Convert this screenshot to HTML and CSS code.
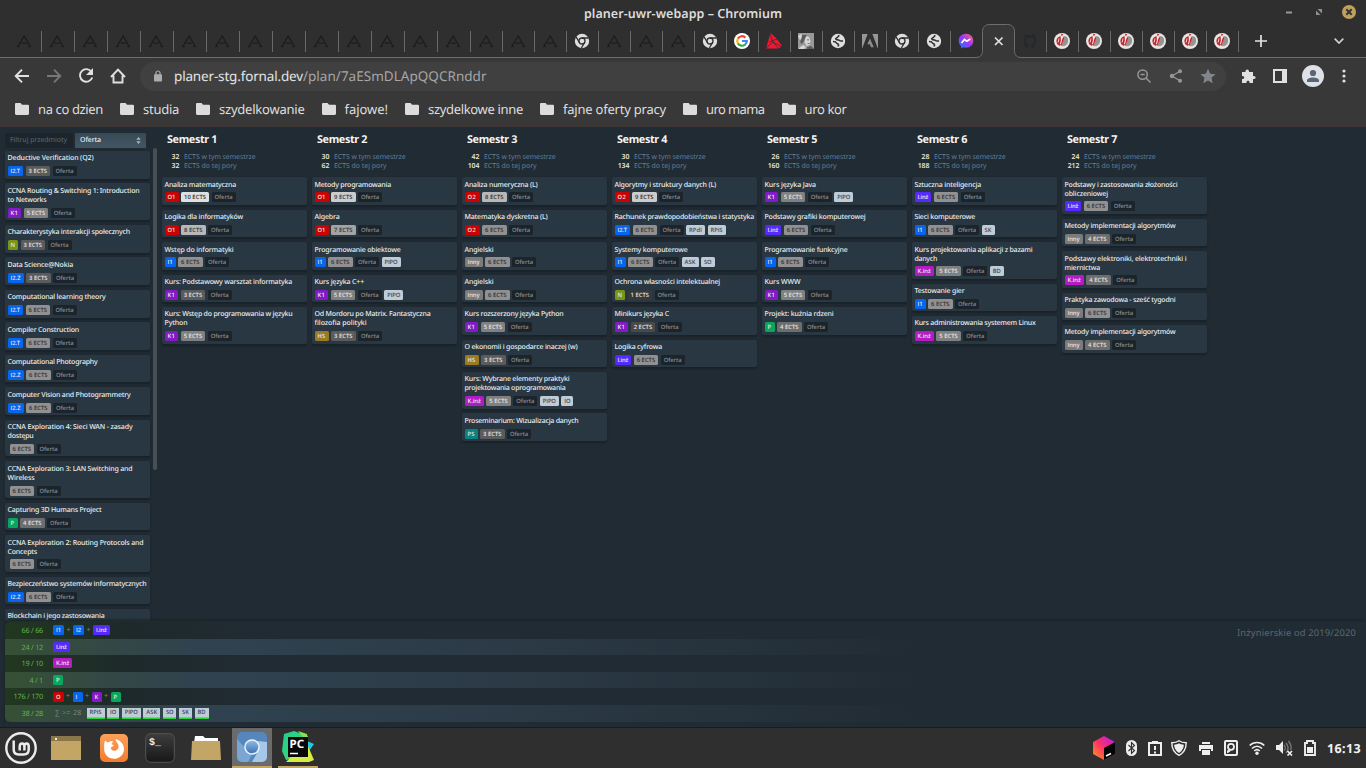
FILE: index.html
```html
<!DOCTYPE html>
<html lang="pl">
<head>
<meta charset="utf-8">
<title>planer-uwr-webapp</title>
<link rel="stylesheet" href="styles.css">
</head>
<body>
<svg class="defs" aria-hidden="true">
  <defs>
    <linearGradient id="gMsg" x1="0" y1="1" x2="1" y2="0"><stop offset="0" stop-color="#0a84ff"/><stop offset=".5" stop-color="#9a35ff"/><stop offset="1" stop-color="#ff6968"/></linearGradient>
    <linearGradient id="gFox" x1="0" y1="0" x2="0" y2="1"><stop offset="0" stop-color="#fba15a"/><stop offset="1" stop-color="#f47a2c"/></linearGradient>
    <linearGradient id="gTerm" x1="0" y1="0" x2="0" y2="1"><stop offset="0" stop-color="#3d3d3d"/><stop offset="1" stop-color="#181818"/></linearGradient>
    <linearGradient id="gBox" x1="0" y1="1" x2="1" y2="0"><stop offset="0" stop-color="#ff9a15"/><stop offset=".5" stop-color="#fc2f6b"/><stop offset="1" stop-color="#b01df2"/></linearGradient>
    <linearGradient id="gBlue" x1="0" y1="0" x2="0" y2="1"><stop offset="0" stop-color="#8db8e2"/><stop offset="1" stop-color="#3f76b8"/></linearGradient>
    <linearGradient id="gPy" x1="0" y1="0" x2="1" y2="1"><stop offset="0" stop-color="#20cf8a"/><stop offset="1" stop-color="#45d67b"/></linearGradient>
  </defs>
  <symbol id="angular" viewBox="0 0 16 16"><path d="M2 13.300L8.200 3l5.800 10.300M5.600 10.200h5.200" fill="none" stroke="#1c1c1c" stroke-width="1.300"/><path d="M.8 13.600h3M12.200 13.600h3" stroke="#1c1c1c"/></symbol>
  <symbol id="chrome" viewBox="0 0 16 16"><circle cx="8" cy="8" r="7.200" fill="#dedede"/><circle cx="8" cy="8" r="3" fill="none" stroke="#2f2f2f" stroke-width="1.300"/><path d="M8 5h6.600M5.400 9.500L2.100 3.900M10.600 9.500l-3.200 5.500" stroke="#2f2f2f" stroke-width="1.300"/></symbol>
  <symbol id="google" viewBox="0 0 16 16"><circle cx="8" cy="8" r="8" fill="#fff"/><g fill="none" stroke-width="2.200"><path d="M11.400 4.600A4.800 4.800 0 0 0 3.900 5.600" stroke="#ea4335"/><path d="M3.900 5.600a4.800 4.800 0 0 0 0 4.800" stroke="#fbbc05"/><path d="M3.900 10.400a4.800 4.800 0 0 0 7.200 1.200" stroke="#34a853"/><path d="M8 8h4.800a4.800 4.800 0 0 1-1.700 3.600" stroke="#4285f4"/></g></symbol>
  <symbol id="redtri" viewBox="0 0 16 16"><path d="M4.500 0L0 15.500h13L16 13 10 5z" fill="#f31734"/><path d="M4 1l3 8 9 5M3 9l8-3M0 15l7-6 6 7" stroke="#2f2f2f" fill="none" stroke-width=".8"/></symbol>
  <symbol id="portrait" viewBox="0 0 16 16"><path fill="#999" d="M0 0h16v16H0z"/><path fill="#d6d6d6" d="M8 3l3 1 1.500 4-1 4-3 1-2-4zM0 3l3-2 2 2-3 4zM1 15l4-3 3 2-2 2H1z"/><path fill="#5a5a5a" d="M4 2h5L7 5 6 8l-2 3-2-2 1.500-3zM9 6.500h2v.7H9zM9.500 10h2v.7h-2zM9 14l4-1 3 3H9z"/></symbol>
  <symbol id="globe" viewBox="0 0 16 16"><circle cx="8" cy="8" r="7.200" fill="#dedede"/><path d="M9.500 2.500C7.500 3 8.500 4.500 6.500 5c-1.500.5-.5 2 1 1.800 1.500-.2 2 1.200 3.500 1.200h2M3 8.500c2 0 3 .3 3.500 1.500s2 .5 2 2-.5 1-.5 1.500" fill="none" stroke="#2f2f2f" stroke-width="1.600"/></symbol>
  <symbol id="adobe" viewBox="0 0 16 16"><path d="M0 1h16v14H0z" fill="#969696"/><path d="M6 0h4l6 16H0z" fill="#2f2f2f"/><path d="M8 5.500l3.800 8.800H9l-1.200-3H5.200z" fill="#8b8b8b"/></symbol>
  <symbol id="messenger" viewBox="0 0 16 16"><path d="M8 .8c-4.300 0-7.300 3-7.300 7 0 2.100.9 3.900 2.300 5.200V15.500l2.200-1.200c.9.300 1.800.4 2.800.4 4.300 0 7.300-3 7.300-7s-3-6.900-7.300-6.900z" fill="url(#gMsg)"/><path d="M3.500 10l3-3.500 2.300 1.800L12.300 6" fill="none" stroke="#fff" stroke-width="1.700"/></symbol>
  <symbol id="github" viewBox="0 0 16 16"><path d="M5.500 15.200v-3.400C3.500 11 2.800 9.500 2.800 7.500c0-1.200.4-2 .9-2.600V2.500l2.200 1.100a8 8 0 0 1 4.200 0l2.200-1.100v2.400c.5.600.9 1.400.9 2.600 0 2-.7 3.500-2.700 4.300v3.400M5.500 13c-2 .6-2-1-3.500-1.300" fill="none" stroke="#24292c" stroke-width="2.200"/></symbol>
  <symbol id="uni" viewBox="0 0 16 16"><circle cx="8" cy="8" r="8" fill="#e8e5e3"/><path d="M9.500 3c4.500 0 5 3.500 4.500 6-.5 2.800-3 4.500-6 4.200z" fill="#969492"/><path d="M6.500 3C2 4.500 1.500 8.500 3.500 11.500L6 13 7 8z" fill="#c5262c"/><path d="M8.500 1L7.500 2.500M9.500 4.500L7 12.500" stroke="#c5262c" fill="none" stroke-width="1.500"/><path d="M5 5.500l-1 4M8.200 4L6.500 11" stroke="#f5f2ef" fill="none" stroke-width=".8"/></symbol>
  <symbol id="folder" viewBox="0 0 14 12"><path d="M1.300 0h4.300L7 1.700h5.700c.8 0 1.300.5 1.300 1.200v7.700c0 .8-.5 1.400-1.300 1.400H1.300C.5 12 0 11.400 0 10.600V1.300C0 .5.5 0 1.300 0z" fill="#dcdcdc"/></symbol>
</svg>

<header class="titlebar">
  <span></span><span class="wtitle" data-w="198">planer-uwr-webapp – Chromium</span>
  <span class="winbtns">
    <svg width="8" height="8" viewBox="0 0 8 8"><path d="M1 4.500h6" stroke="#999" stroke-width="2"/></svg>
    <svg width="8" height="8" viewBox="0 0 8 8"><path d="M2.500 1H7v4.500zM1 2.500V7h4.500z" fill="#8f8f8f"/></svg>
    <svg width="14" height="14" viewBox="0 0 14 14"><circle cx="7" cy="7" r="7" fill="#bfa15c"/><path d="M4.300 4.300l5.400 5.400m0-5.400L4.300 9.700" stroke="#333" stroke-width="2"/></svg>
  </span>
</header>
<nav class="tabs">
  <div class="tablist" id="tabs"></div>
  <svg class="plus" width="12" height="12" viewBox="0 0 12 12"><path d="M6 0v12M0 6h12" stroke="#e3e3e3" stroke-width="1.700"/></svg>
  <svg class="chev" width="10" height="6" viewBox="0 0 10 6"><path d="M.7.700L5 5 9.300.700" fill="none" stroke="#d0d0d0" stroke-width="1.700"/></svg>
</nav>
<div class="toolbar">
  <div class="navicons">
    <svg width="16" height="16" viewBox="0 0 16 16"><path d="M15 8H2m6-6.300L1.700 8 8 14.300" fill="none" stroke="#e0e0e0" stroke-width="1.900"/></svg>
    <svg width="16" height="16" viewBox="0 0 16 16"><path d="M1 8h13M8 1.700L14.300 8 8 14.300" fill="none" stroke="#777" stroke-width="1.900"/></svg>
    <svg width="16" height="16" viewBox="0 0 16 16"><path d="M13.500 3.800A6.300 6.300 0 1 0 14.300 9.500" fill="none" stroke="#e0e0e0" stroke-width="1.900"/><path d="M15 0v7H8z" fill="#e0e0e0"/></svg>
    <svg width="16" height="16" viewBox="0 0 16 16"><path d="M3.500 7.500v7h9v-7M1 9l7-7.300L15 9" fill="none" stroke="#e0e0e0" stroke-width="1.900"/></svg>
  </div>
  <div class="omnibox">
    <svg class="lock" width="8" height="12" viewBox="0 0 8 12"><path d="M2 5V3a2 2 0 0 1 4 0v2" fill="none" stroke="#a9adb1" stroke-width="1.200"/><rect y="4.200" width="8" height="7.400" rx="1" fill="#a9adb1"/></svg>
    <span class="url"><span data-w="129">planer-stg.fornal.dev</span><span class="path" data-w="183.500">/plan/7aESmDLApQQCRnddr</span></span>
    <span class="omniicons">
      <svg width="14" height="14" viewBox="0 0 14 14"><circle cx="5.600" cy="5.600" r="4.700" fill="none" stroke="#969696" stroke-width="1.500"/><path d="M9 9l4.500 4.500M3.500 5.600h4.200" stroke="#969696" stroke-width="1.500"/></svg>
      <svg width="14" height="14" viewBox="0 0 14 14"><path d="M11 2.300L3 7l8 4.700" fill="none" stroke="#969696" stroke-width="1.300"/><g fill="#969696"><circle cx="11" cy="2.300" r="2"/><circle cx="3" cy="7" r="2.200"/><circle cx="11" cy="11.700" r="2"/></g></svg>
      <svg width="16" height="16" viewBox="0 0 16 16"><path d="M8 .7l2.200 5 5.300.5-4 3.600 1.200 5.400L8 12.400l-4.700 2.800 1.200-5.400-4-3.600 5.300-.5z" fill="#80868b"/></svg>
    </span>
  </div>
  <div class="exticons">
    <svg width="15" height="15" viewBox="0 0 15 15"><path d="M1 3h3.500c-.5-3.500 4-3.500 3.500 0H12v4c3.500-.5 3.500 3.500 0 3v4H8.500c.5-3-3.500-3-3 0H1v-4c3 .5 3-3.500 0-3z" fill="#e0e0e0"/></svg>
    <svg width="14" height="14" viewBox="0 0 14 14"><path d="M1 1h12v12H1z" fill="none" stroke="#e0e0e0" stroke-width="2"/><path d="M9 1h4v12H9z" fill="#e0e0e0"/></svg>
    <svg width="22" height="22" viewBox="0 0 22 22"><circle cx="11" cy="11" r="11" fill="#dee1e6"/><circle cx="11" cy="8" r="3.100" fill="#5a6478"/><path d="M5 17v-1.500c0-4 12-4 12 0V17z" fill="#5a6478"/></svg>
    <svg width="4" height="14" viewBox="0 0 4 14"><g fill="#e0e0e0"><circle cx="2" cy="2" r="1.600"/><circle cx="2" cy="7" r="1.600"/><circle cx="2" cy="12" r="1.600"/></g></svg>
  </div>
</div>
<div class="bookmarks" id="bookmarks"></div>

<main class="app">
  <aside class="side">
    <div class="filter"><span class="search"><span data-w="57">Filtruj przedmioty</span></span><span class="select"><span data-w="21">Oferta</span><svg width="5" height="7" viewBox="0 0 5 7"><path d="M.3 2.800L2.500 0l2.200 2.800zM.3 4.200L2.500 7l2.200-2.800z" fill="#a9b4bd"/></svg></span></div>
    <div class="sidebody"><div class="cards" id="side"></div><div class="scroll"></div></div>
  </aside>
  <section class="semesters" id="semesters"></section>
</main>
<section class="rules">
  <div class="rulelist" id="rules"></div>
  <div class="ruleset"><span data-w="119">Inżynierskie od 2019/2020</span></div>
</section>

<footer class="taskbar">
  <div class="apps">
    <span class="app-i mint"><svg width="32" height="32" viewBox="0 0 32 32"><g fill="none" stroke="#ececec"><circle cx="16" cy="16" r="14.700" stroke-width="2.400"/><path d="M8.700 8.500v9c0 3.500 2 5 5 5h5c3.500 0 5-2 5-5v-3c0-4-4.300-4-4.300 0v4m0-4c0-4-4.700-4-4.700 0v4" stroke-width="2.500"/></g></svg></span>
    <span class="app-i"><svg width="30" height="26" viewBox="0 0 30 26"><path d="M0 1h30v24H0z" fill="#c3a665"/><path d="M0 1h30v5H0z" fill="#8a7648"/><path d="M4 3h2v2H4z" fill="#eee"/></svg></span>
    <span class="app-i"><svg width="28" height="28" viewBox="0 0 28 28"><rect width="28" height="28" rx="5" fill="url(#gFox)"/><path d="M5 6.500l2.500 2 4-1.500c1-.3 1.700.3 1.200 1.300L11.500 10l2.500 1.500-3 2c-.5 2.700 3 4.500 5.800 2.500 2.400-1.700 2.200-4.800.2-7.500-.6-1-1.500-2-1.500-3.500 5.500 1.500 8.500 5.500 8.500 10.200 0 5.500-4.500 9.600-10 9.600s-9.800-4-9.800-9.500c0-3.300-.3-5.800.8-8.800z" fill="#fff"/></svg></span>
    <span class="app-i term"><svg width="30" height="30" viewBox="0 0 30 30"><rect x=".7" y=".7" width="28.600" height="28.600" rx="5" fill="url(#gTerm)" stroke="#555"/><text x="4" y="12" class="termtext">$_</text></svg></span>
    <span class="app-i"><svg width="30" height="26" viewBox="0 0 30 26"><path d="M4 1h8l2 2h13v5H3z" fill="#fff"/><path d="M1 6h28l1 19H0z" fill="#c3a665"/></svg></span>
    <span class="app-i on"><svg width="30" height="30" viewBox="0 0 30 30"><rect width="30" height="30" rx="5" fill="#5587bd"/><path d="M9 15l12-6 9 1v15a5 5 0 0 1-5 5H15l5-9z" fill="#a5c7e8"/><path d="M0 7l10 11 5 4-4 8H5a5 5 0 0 1-5-5z" fill="#79a6d5"/><circle cx="15" cy="15" r="7.800" fill="#e9f1f9"/><circle cx="15" cy="15" r="6.300" fill="url(#gBlue)"/></svg></span>
    <span class="app-i open"><svg width="32" height="32" viewBox="0 0 32 32"><path d="M2 3l10-3 14 5-2 20L4 29l-4-9z" fill="url(#gPy)"/><path d="M25 10l7 3-5 7z" fill="#18cee8"/><path d="M16 0l9 3 1 9z" fill="#8be04e"/><path d="M26 15l6 14-5 2H4l6-6z" fill="#d5ec42"/><path d="M6 6h20v20H6z" fill="#080808"/><text x="7.500" y="17" class="pctext">PC</text><path d="M8 22.500h8" stroke="#fff" stroke-width="1.500"/></svg></span>
  </div>
  <div class="tray">
    <svg width="22" height="24" viewBox="0 0 22 24"><path d="M11 0l11 6v12l-11 6-11-6V6z" fill="url(#gBox)"/><path d="M11 12l11-6v12l-11 6z" fill="#050505"/><path d="M13 20l5-2.500" stroke="#fff" stroke-width="1.500"/></svg>
    <svg width="11" height="16" viewBox="0 0 11 16"><rect width="11" height="16" rx="5.500" fill="#eee"/><path d="M2.500 5l6 5.500-3 3v-11l3 3-6 5.500" fill="none" stroke="#2f2f2f" stroke-width="1.100"/></svg>
    <svg width="14" height="16" viewBox="0 0 14 16"><path d="M1 3h12v12H1z" fill="none" stroke="#eee" stroke-width="2"/><path d="M4 1h6v3H4z" fill="#eee"/><path d="M7 6v4M7 11.500v2" stroke="#eee" stroke-width="2"/></svg>
    <svg class="shield" width="16" height="16" viewBox="0 0 16 16"><path d="M8 .8c2 1.500 4.500 2 7.200 2 0 6-2.200 10-7.200 12.500C3 12.800.8 8.800.8 2.800 3.500 2.800 6 2.300 8 .8z" fill="none" stroke="#eee" stroke-width="1.400"/><path d="M8 3.300c1.500 1 3 1.300 4.900 1.500-.2 3.700-1.900 6.500-4.900 8.200-3-1.700-4.700-4.500-4.900-8.200C5 4.600 6.500 4.300 8 3.300z" fill="#eee"/></svg>
    <svg width="14" height="14" viewBox="0 0 14 14"><path d="M3 1h8v2H3zM0 4h14v6h-2V8H2v2H0zM3 9h8v5H3z" fill="#eee"/></svg>
    <svg width="14" height="16" viewBox="0 0 14 16"><rect x="1" y="1" width="12" height="14" rx="1" fill="none" stroke="#eee" stroke-width="2"/><circle cx="7" cy="6.800" r="3" fill="none" stroke="#eee" stroke-width="1.800"/><path d="M3 10.500l3-1 1 1.300L4 13H3z" fill="#eee"/></svg>
    <svg width="16" height="14" viewBox="0 0 16 14"><g fill="none" stroke="#eee" stroke-width="1.700"><path d="M.7 4.500c4-4 10.600-4 14.600 0M3 7.500c3-3 7-3 10 0M5.300 10c1.700-1.700 3.700-1.700 5.400 0"/></g><circle cx="8" cy="12.300" r="1.700" fill="#eee"/></svg>
    <svg width="17" height="16" viewBox="0 0 17 16"><path d="M0 5h3l4-4v13l-4-4H0z" fill="#eee"/><path d="M8 5c1.500 1.500 1.500 4 0 5.500M10 3c2.500 3 2.500 7 0 10M12.500 1c3 4 3 7 2 9" fill="none" stroke="#777" stroke-width="1.400"/><path d="M11.500 11l4.500 4.500m0-4.500l-4.500 4.500" stroke="#eee" stroke-width="1.700"/></svg>
    <svg width="12" height="16" viewBox="0 0 12 16"><path d="M1 3h2V1h6v2h2v12H1z" fill="none" stroke="#eee" stroke-width="1.900"/><path d="M3 7h6v6H3z" fill="#eee"/></svg>
    <b class="clock"><span data-w="34">16:13</span></b>
  </div>
</footer>
<script src="app.js"></script>
</body>
</html>
```
FILE: styles.css
```css
* { box-sizing: border-box; }
body { margin: 0; width: 1366px; height: 768px; overflow: hidden; display: flex; flex-direction: column; background: #212b33; color: #e8e8e8; font-family: "Noto Sans", "Open Sans", sans-serif; text-rendering: geometricPrecision; }
svg { display: block; flex: none; }
.defs { position: absolute; width: 0; height: 0; }
[data-w] { display: inline-block; white-space: nowrap; }

.titlebar { height: 24px; flex: none; display: grid; grid-template-columns: 1fr auto 1fr; align-items: center; background: #2f2f2f; padding-top: 3px; }
.wtitle { font-size: 12.500px; font-weight: 600; color: #dcdcdc; }
.winbtns { display: flex; justify-content: flex-end; align-items: center; gap: 22px; padding: 0 10px 3px 0; }
.winbtns svg:last-child { margin-left: -3px; }

.tabs { height: 34px; flex: none; display: flex; background: #2f2f2f; border-bottom: 1px solid #6e6e6e; padding-left: 9px; }
.tablist { display: flex; }
.tab { width: 32px; height: 21px; margin-top: 7px; padding: 2px 0 0 7px; border-right: 1px solid #686868; }
.tab.wide { width: 33px; }
.tab.noline { border-color: transparent; }
.tab.active { height: 34px; margin-top: 0; padding: 0; border: 0; position: relative; }
.tab.active svg { position: absolute; left: -8px; top: 0; }
.tabs .plus { margin: 11px 0 0 16px; }
.tabs .chev { margin: 14px 22px 0 auto; }

.toolbar { height: 36px; flex: none; display: flex; align-items: center; background: #383838; padding: 0 19px 0 14px; }
.navicons { display: flex; gap: 16px; width: 126px; }
.omnibox { width: 1086px; height: 29px; border-radius: 15px; background: #404040; display: flex; align-items: center; padding: 0 10px 0 14px; }
.url { font-size: 13.500px; margin-left: 12px; color: #e4e4e4; display: flex; }
.path { color: #a6a6a6; }
.omniicons { margin-left: auto; display: flex; align-items: center; gap: 17.500px; }
.exticons { margin-left: auto; display: flex; align-items: center; gap: 17px; }
.exticons svg:nth-child(3) { margin-left: -2px; }
.exticons svg:nth-child(4) { margin: 0 1px; }
.bookmarks { height: 33px; flex: none; background: #383838; border-bottom: 1px solid #3c3534; display: flex; padding-left: 15px; font-size: 13px; color: #dedede; }
.bm { display: flex; align-items: center; gap: 9px; margin-right: 17px; padding-bottom: 3px; }

.app { flex: none; height: 494px; display: flex; overflow: hidden; }
.side { width: 162px; padding: 5px 0 0 5px; }
.filter { display: flex; align-items: center; height: 17px; gap: 2px; }
.filter > span { font-size: 7px; height: 15px; display: flex; align-items: center; }
.search { width: 68px; background: #1c252c; color: #5b6a75; padding-left: 5px; }
.select { width: 71px; background: linear-gradient(#384956, #435663); border-radius: 1px; padding: 0 5px; justify-content: space-between; color: #f0f0f0; font-weight: 500; }
.sidebody { display: flex; gap: 3px; }
.sidebody .cards { margin-top: 2px; }
.scroll { width: 4px; height: 322px; margin: -1px 0 0; background: #474e54; border-radius: 2px; }
.cards { display: flex; flex-direction: column; gap: 4.800px; }
.card { width: 145px; flex: none; background: #293742; border-radius: 2px; box-shadow: 0 1.500px 1.500px #192229; padding: 3.400px 2px 2.400px; }
.card-title { font-size: 7px; line-height: 9px; font-weight: 500; color: #ededed; padding-left: .5px; }
.card-title span { display: block; width: max-content; }
.tags { display: flex; gap: 2.500px; margin-top: 2.900px; height: 10px; padding-left: .5px; }
.tag { flex: none; height: 10px; border-radius: 1.500px; font-family: "Open Sans", "Noto Sans", sans-serif; font-size: 5.800px; line-height: 10px; padding-left: 3px; font-weight: 600; color: #e4e4e4; white-space: nowrap; }
.tag.none { width: 0; padding: 0; margin-right: -.5px; }
.t-o { background: #c90202; } .t-i { background: #0766ef; } .t-k { background: #821bc5; } .t-n { background: #789616; }
.t-p { background: #08a75e; } .t-hs { background: #9c7a22; } .t-ps { background: #07847f; } .t-inny { background: #7b7b7b; }
.t-ii { background: #5829ff; } .t-ki { background: #b31bc5; } .t-eff { background: #bfccd7; color: #3c4854; } .t-of { background: #1c242b; color: #85898c; }
.e1 { background: #37383a; } .e2 { background: #494949; } .e3 { background: #5b5b5b; } .e4 { background: #6d6d6d; } .e5 { background: #808080; }
.e6 { background: #929090; color: #303030; } .e7 { background: #a4a2a2; color: #303030; } .e8 { background: #b8b8b8; color: #303030; } .e9 { background: #cccccc; color: #303030; } .e10 { background: #e0e0e0; color: #303030; }

.semesters { display: flex; gap: 5px; }
.sem-title { margin: 5px 0 0 5px; font-size: 10.800px; line-height: 15px; font-weight: 700; color: #f4f4f4; height: 20.700px; }
.stats { display: grid; grid-template-columns: 17.500px auto; column-gap: 4.500px; font-size: 6.900px; line-height: 9px; height: 24.500px; align-content: start; color: #647f97; }
.stats b { text-align: right; font-weight: 600; color: #e5e4dc; }

.rules { flex: none; height: 106px; position: relative; margin-left: 5px; border-radius: 5px 5px 0 0; box-shadow: 0 -1px 3px #171f25; background: #212b33; }
.rulelist { padding-top: 1px; }
.rule { height: 16.600px; display: flex; align-items: center; background: linear-gradient(90deg, #22371f 0, #1d292a 9%, #212b33 18%); }
.rule:nth-child(even) { background: linear-gradient(90deg, #365034 0, #354c3f 4%, #304250 14%, #2c3b47 35%, #212b33 68%); }
.rule:first-child { border-top-left-radius: 5px; }
.rule:last-child { border-bottom-left-radius: 5px; }
.score { width: 38px; text-align: right; font-size: 7.300px; line-height: 10px; padding-top: 1.500px; color: #61b04e; margin-right: 10px; }
.rule .op { width: 9px; text-align: center; font-size: 7px; line-height: 10px; padding-top: 1.500px; color: #7d8487; }
.rule .sum { font-size: 7px; color: #7a8285; width: 31.500px; margin-left: 2px; white-space: pre; }
.rule .t-eff { box-shadow: inset 0 -1.400px #27d336; margin-right: 2.600px; border-radius: 0; line-height: 9.500px; height: 11px; }
.ruleset { position: absolute; right: 10px; top: 5px; font-size: 9.300px; line-height: 13px; color: #5b6975; }

.taskbar { flex: none; height: 41px; background: #2f2f2f; border-top: 1px solid #1c1c1c; display: flex; justify-content: space-between; }
.apps { display: flex; padding-left: 1px; }
.app-i { width: 40px; height: 40px; margin-right: 6px; display: grid; place-items: center; }
.app-i.mint { margin-right: 5px; }
.app-i.on { background: #6b6b6b; border-bottom: 2px solid #c3a665; }
.app-i.open { border-bottom: 2px solid #c3a665; }
.apps .app-i:nth-child(3) { margin-left: 2px; }
.termtext { font: bold 10px "Liberation Mono", monospace; fill: #eee; }
.pctext { font: bold 11.500px "Noto Sans", sans-serif; fill: #fff; }
.tray { display: flex; align-items: center; gap: 11.100px; padding-right: 5px; }
.tray .shield { margin-left: -2px; }
.clock { font-size: 12.500px; font-weight: 700; color: #f2f2f2; }
```
FILE: app.js
```js
const tagWidths = {"O1":14,"O2":15,"I1":11,"I2":11,"I2.T":15.5,"I2.Z":16,"K1":13.7,"N":10.5,"P":10,"HS":14,"PS":13,"Inny":18,"I.inż":16.7,"K.inż":19.3,"PIPO":19,"RPdl":19,"RPiS":18,"ASK":17,"SO":13.5,"SK":13,"BD":14,"IO":12,"Oferta":24,"O":10.5,"I":10,"K":10};
const tagClass = {"O1":"o","O2":"o","O":"o","I1":"i","I2":"i","I":"i","I2.T":"i","I2.Z":"i","K1":"k","K":"k","N":"n","P":"p","HS":"hs","PS":"ps","Inny":"inny","I.inż":"ii","K.inż":"ki","Oferta":"of"};

const tag = t => {
  if (!t) return '<span class="tag none"></span>';
  const w = tagWidths[t];
  return `<span class="tag t-${tagClass[t] || 'eff'}" style="width:${w}px"><span data-w="${w - 6}">${t}</span></span>`;
};
const ects = n => {
  const w = n === 10 ? 28 : 24.5;
  return `<span class="tag e${n}" style="width:${w}px"><span data-w="${w - 6}">${n} ECTS</span></span>`;
};
// A course: title lines with their widths, type, ECTS points, effects
const card = ([lines, type, points, ...effects]) => `<article class="card"><div class="card-title">${
  lines.split('|').map(l => { const [t, w] = l.split('~'); return `<span data-w="${w}">${t}</span>`; }).join('')
}</div>${points ? `<div class="tags">${tag(type)}${ects(points)}${tag('Oferta')}${effects.map(tag).join('')}</div>` : ''}</article>`;

const offer = [
  ['Deductive Verification (Q2)~86','I2.T',3],
  ['CCNA Routing &amp; Switching 1: Introduction~132|to Networks~39','K1',5],
  ['Charakterystyka interakcji społecznych~122.5','N',3],
  ['Data Science@Nokia~65.5','I2.Z',3],
  ['Computational learning theory~98','I2.T',6],
  ['Compiler Construction~71.5','I2.T',6],
  ['Computational Photography~90','I2.Z',6],
  ['Computer Vision and Photogrammetry~123','I2.Z',6],
  ['CCNA Exploration 4: Sieci WAN - zasady~125|dostępu~26','',6],
  ['CCNA Exploration 3: LAN Switching and~125|Wireless~27','',6],
  ['Capturing 3D Humans Project~94','P',4],
  ['CCNA Exploration 2: Routing Protocols and~136|Concepts~29.5','',6],
  ['Bezpieczeństwo systemów informatycznych~139','I2.Z',6],
  ['Blockchain i jego zastosowania~97']
];
const semesters = [
  [32,32,[['Analiza matematyczna~71.5','O1',10],['Logika dla informatyków~78.5','O1',8],['Wstęp do informatyki~69','I1',6],['Kurs: Podstawowy warsztat informatyka~127.5','K1',3],['Kurs: Wstęp do programowania w języku~128|Python~23','K1',5]]],
  [30,62,[['Metody programowania~76.5','O1',9],['Algebra~25','O1',7],['Programowanie obiektowe~86','I1',6,'PIPO'],['Kurs języka C++~49.5','K1',5,'PIPO'],['Od Mordoru po Matrix. Fantastyczna~116|filozofia polityki~52','HS',3]]],
  [42,104,[['Analiza numeryczna (L)~73','O2',8],['Matematyka dyskretna (L)~83','O2',6],['Angielski~29','Inny',6],['Angielski~29','Inny',6],['Kurs rozszerzony języka Python~99','K1',5],['O ekonomii i gospodarce inaczej (w)~113','HS',3],['Kurs: Wybrane elementy praktyki~105|projektowania oprogramowania~101','K.inż',5,'PIPO','IO'],['Proseminarium: Wizualizacja danych~114','PS',3]]],
  [30,134,[['Algorytmy i struktury danych (L)~101.5','O2',9],['Rachunek prawdopodobieństwa i statystyka~139.5','I2.T',6,'RPdl','RPiS'],['Systemy komputerowe~73','I1',6,'ASK','SO'],['Ochrona własności intelektualnej~105.5','N',1],['Minikurs języka C~54.5','K1',2],['Logika cyfrowa~47.5','I.inż',6]]],
  [26,160,[['Kurs języka Java~51.5','K1',5,'PIPO'],['Podstawy grafiki komputerowej~101','I.inż',6],['Programowanie funkcyjne~83','I1',6],['Kurs WWW~36','K1',5],['Projekt: kuźnia rdzeni~69','P',4]]],
  [28,188,[['Sztuczna inteligencja~66.5','I.inż',6],['Sieci komputerowe~60.5','I1',6,'SK'],['Kurs projektowania aplikacji z bazami~118|danych~22.5','K.inż',5,'BD'],['Testowanie gier~50','I1',6],['Kurs administrowania systemem Linux~121','K.inż',5]]],
  [24,212,[['Podstawy i zastosowania złożoności~113|obliczeniowej~43.5','I.inż',6],['Metody implementacji algorytmów~111','Inny',4],['Podstawy elektroniki, elektrotechniki i~122|miernictwa~35.5','K.inż',4],['Praktyka zawodowa - sześć tygodni~111','Inny',6],['Metody implementacji algorytmów~111','Inny',4]]]
];
const rules = [
  ['66 / 66', 21.5, ['I1','I2','I.inż']], ['24 / 12', 21.5, ['I.inż']], ['19 / 10', 21.5, ['K.inż']],
  ['4 / 1', 13.5, ['P']], ['176 / 170', 29.5, ['O','I','K','P']], ['38 / 28', 21.5, null]
];
const bookmarks = [['na co dzien',65],['studia',36],['szydelkowanie',85.5],['fajowe!',43.5],['szydelkowe inne',95],['fajne oferty pracy',103],['uro mama',58.5],['uro kor',42]];

const icon = (id, w, h) => `<svg width="${w}" height="${h}"><use href="#${id}"/></svg>`;
const put = (id, html) => { document.getElementById(id).innerHTML = html; };

const tabs = [...Array(17).fill('angular'),'chrome','angular','angular','angular','chrome','google','redtri','portrait','globe','adobe','chrome','globe','messenger','active','github',...Array(6).fill('uni')];
put('tabs', tabs.map((t, i) => t === 'active'
  ? '<div class="tab active"><svg width="48" height="34" viewBox="0 0 48 34"><path d="M0 33.500c5 0 7.500-2 7.500-7V7.500c0-4 2.500-7 7-7h18c4.500 0 7 3 7 7v19c0 5 2.500 7 7.500 7v.5H0z" fill="#383838"/><path d="M0 33.500c5 0 7.500-2 7.500-7V7.500c0-4 2.500-7 7-7h18c4.500 0 7 3 7 7v19c0 5 2.500 7 7.500 7" fill="none" stroke="#6e6e6e"/><path d="M20 13.500l7.500 7.500m0-7.500L20 21" stroke="#e0e0e0" stroke-width="1.700"/></svg></div>'
  : `<div class="tab${i < 14 ? ' wide' : ''}${t === 'messenger' ? ' noline' : ''}">${icon(t, 16, 16)}</div>`).join(''));
put('bookmarks', bookmarks.map(([t, w]) => `<span class="bm">${icon('folder', 14, 12)}<span data-w="${w}">${t}</span></span>`).join(''));
put('side', offer.map(card).join(''));
put('semesters', semesters.map(([now, total, list], i) => `<div class="sem"><div class="sem-title"><span data-w="50">Semestr ${i + 1}</span></div><div class="stats"><b>${now}</b><span><span data-w="71.5">ECTS w tym semestrze</span></span><b>${total}</b><span><span data-w="52.5">ECTS do tej pory</span></span></div><div class="cards">${list.map(card).join('')}</div></div>`).join(''));
put('rules', rules.map(([score, w, parts]) => `<div class="rule"><span class="score"><span data-w="${w}">${score}</span></span>${parts
  ? parts.map(tag).join('<span class="op">+</span>')
  : '<span class="sum"><span data-w="27">∑ &gt;=  28</span></span>' + ['RPiS','IO','PIPO','ASK','SO','SK','BD'].map(tag).join('')}</div>`).join(''));

// Distribute the difference between natural and wanted width over the letters
document.querySelectorAll('[data-w]').forEach(el => {
  const natural = el.getBoundingClientRect().width;
  el.style.letterSpacing = (el.dataset.w - natural) / el.textContent.length + 'px';
});
```
